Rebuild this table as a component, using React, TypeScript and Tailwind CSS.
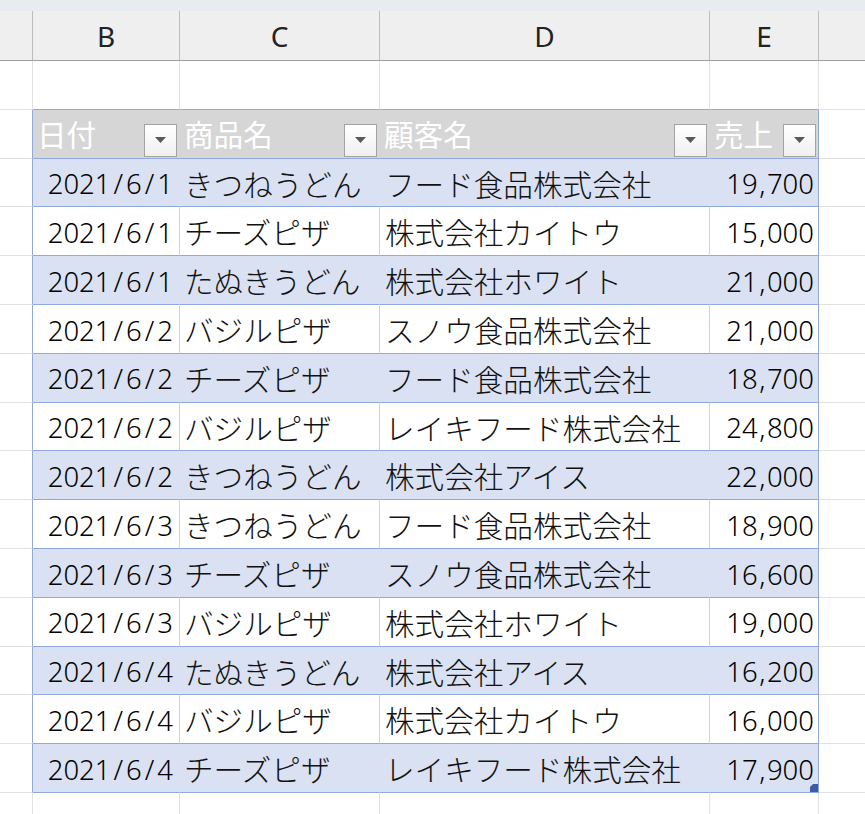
import React from "react";

const rows: [string, string, string, string][] = [
  ["2021/6/1", "きつねうどん", "フード食品株式会社", "19,700"],
  ["2021/6/1", "チーズピザ", "株式会社カイトウ", "15,000"],
  ["2021/6/1", "たぬきうどん", "株式会社ホワイト", "21,000"],
  ["2021/6/2", "バジルピザ", "スノウ食品株式会社", "21,000"],
  ["2021/6/2", "チーズピザ", "フード食品株式会社", "18,700"],
  ["2021/6/2", "バジルピザ", "レイキフード株式会社", "24,800"],
  ["2021/6/2", "きつねうどん", "株式会社アイス", "22,000"],
  ["2021/6/3", "きつねうどん", "フード食品株式会社", "18,900"],
  ["2021/6/3", "チーズピザ", "スノウ食品株式会社", "16,600"],
  ["2021/6/3", "バジルピザ", "株式会社ホワイト", "19,000"],
  ["2021/6/4", "たぬきうどん", "株式会社アイス", "16,200"],
  ["2021/6/4", "バジルピザ", "株式会社カイトウ", "16,000"],
  ["2021/6/4", "チーズピザ", "レイキフード株式会社", "17,900"],
];

function FilterButton() {
  return (
    <div className="flex h-[33px] w-[33px] shrink-0 items-center justify-center border border-[#a3a3a3] bg-gradient-to-b from-[#ffffff] to-[#f0f0f0]">
      <svg width="11" height="6" viewBox="0 0 11 6">
        <polygon points="0,0 11,0 5.5,6" fill="#5a5a5a" />
      </svg>
    </div>
  );
}

function HeaderCell({ label, width, last }: { label: string; width: string; last?: boolean }) {
  return (
    <div
      className={`${width} flex h-full items-end justify-between border-b border-r bg-[#d6d6d6] pb-[1px] pr-[2px] pl-[4px] ${
        last ? "border-b-[#8ea9db] border-r-[#8ea9db]" : "border-b-[#8ea9db] border-r-[#d6d6d6]"
      }`}
    >
      <span className="self-center pt-[1px] text-[29.6px] font-normal leading-none text-white">{label}</span>
      <FilterButton />
    </div>
  );
}

function DateText({ v }: { v: string }) {
  const parts = v.split("/");
  return (
    <span className="font-['Noto_Sans',sans-serif] text-[27.5px] font-light text-black">
      {parts.map((p, i) => (
        <React.Fragment key={i}>
          {i > 0 && <span className="mx-[3px]">/</span>}
          {p}
        </React.Fragment>
      ))}
    </span>
  );
}

function AmountText({ v }: { v: string }) {
  const parts = v.split(",");
  return (
    <span className="font-['Noto_Sans',sans-serif] text-[27.5px] font-light text-black">
      {parts[0]}
      <span className="mx-[1.5px]">,</span>
      {parts[1]}
    </span>
  );
}

export default function App() {
  return (
    <div className="h-[814px] w-[865px] overflow-hidden bg-white font-['Noto_Sans_CJK_JP',sans-serif] font-light text-[#111]">
      <div className="h-[11px] bg-[#e8ecf1]" />
      <div className="flex h-[50px] border-b border-[#a0a0a0] bg-[#efefef] font-['Noto_Sans',sans-serif] text-[28px] font-normal text-[#222]">
        <div className="w-[33px] border-r border-[#bdbdbd]" />
        <div className="flex w-[147px] items-center justify-center border-r border-[#bdbdbd]">B</div>
        <div className="flex w-[200px] items-center justify-center border-r border-[#bdbdbd]">C</div>
        <div className="flex w-[330px] items-center justify-center border-r border-[#bdbdbd]">D</div>
        <div className="flex w-[109px] items-center justify-center border-r border-[#bdbdbd]">E</div>
        <div className="flex-1" />
      </div>

      {/* row 1 */}
      <div className="flex h-[48.8px]">
        <div className="w-[33px] border-b border-r border-[#e1e1e1]" />
        <div className="w-[147px] border-b border-r border-b-[#8ea9db] border-r-[#e1e1e1]" />
        <div className="w-[200px] border-b border-r border-b-[#8ea9db] border-r-[#e1e1e1]" />
        <div className="w-[330px] border-b border-r border-b-[#8ea9db] border-r-[#e1e1e1]" />
        <div className="w-[109px] border-b border-r border-b-[#8ea9db] border-r-[#e1e1e1]" />
        <div className="flex-1 border-b border-[#e1e1e1]" />
      </div>

      {/* table header */}
      <div className="flex h-[48.8px]">
        <div className="w-[33px] border-b border-r border-b-[#e1e1e1] border-r-[#8ea9db]" />
        <HeaderCell label="日付" width="w-[147px]" />
        <HeaderCell label="商品名" width="w-[200px]" />
        <HeaderCell label="顧客名" width="w-[330px]" />
        <HeaderCell label="売上" width="w-[109px]" last />
        <div className="flex-1 border-b border-[#e1e1e1]" />
      </div>

      {rows.map((r, i) => {
        const band = i % 2 === 0;
        const bg = band ? "bg-[#d9e1f2]" : "bg-white";
        const inner = band ? "border-r-[#d9e1f2]" : "border-r-[#d4d4d4]";
        const isLast = i === rows.length - 1;
        return (
          <div key={i} className="flex h-[48.8px] text-[29.6px] leading-none">
            <div className="w-[33px] border-b border-r border-b-[#e1e1e1] border-r-[#8ea9db]" />
            <div className={`${bg} ${inner} flex w-[147px] items-center justify-end border-b border-r border-b-[#8ea9db] pr-[6px] pt-[3px]`}>
              <DateText v={r[0]} />
            </div>
            <div className={`${bg} ${inner} flex w-[200px] items-center border-b border-r border-b-[#8ea9db] pl-[4px] pt-[2px]`}>
              {r[1]}
            </div>
            <div className={`${bg} ${inner} flex w-[330px] items-center border-b border-r border-b-[#8ea9db] pl-[5px] pt-[2px]`}>
              {r[2]}
            </div>
            <div className={`${bg} relative flex w-[109px] items-center justify-end border-b border-r border-b-[#8ea9db] border-r-[#8ea9db] pr-[4px] pt-[3px]`}>
              <AmountText v={r[3]} />
              {isLast && (
                <svg className="absolute bottom-0 right-0" width="8" height="8" viewBox="0 0 8 8">
                  <polygon points="3,0 8,0 8,8 0,8 0,3" fill="#3f5aa9" />
                </svg>
              )}
            </div>
            <div className="flex-1 border-b border-[#e1e1e1]" />
          </div>
        );
      })}

      {/* trailing row */}
      <div className="flex h-[48.8px]">
        <div className="w-[33px] border-b border-r border-[#e1e1e1]" />
        <div className="w-[147px] border-b border-r border-[#e1e1e1]" />
        <div className="w-[200px] border-b border-r border-[#e1e1e1]" />
        <div className="w-[330px] border-b border-r border-[#e1e1e1]" />
        <div className="w-[109px] border-b border-r border-[#e1e1e1]" />
        <div className="flex-1 border-b border-[#e1e1e1]" />
      </div>
    </div>
  );
}
